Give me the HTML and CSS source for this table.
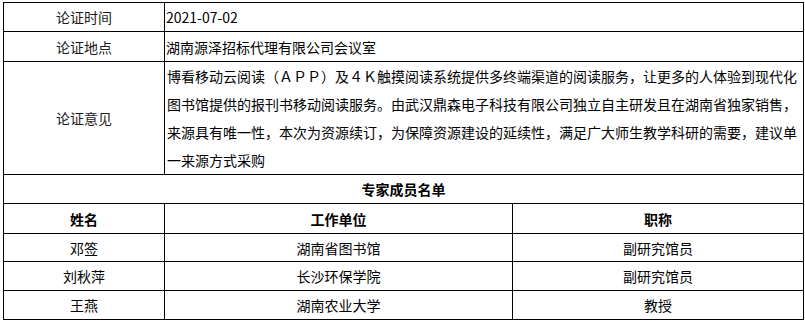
FILE: index.html
```html
<!DOCTYPE html>
<html lang="zh-CN">
<head>
<meta charset="utf-8">
<link rel="stylesheet" href="styles.css">
</head>
<body>
<div class="wrap">
<table class="sheet">
  <colgroup>
    <col class="c1">
    <col class="c2">
    <col class="c3">
  </colgroup>
  <tr class="r29">
    <td class="label">论证时间</td>
    <td class="value" colspan="2">2021-07-02</td>
  </tr>
  <tr class="r30">
    <td class="label">论证地点</td>
    <td class="value" colspan="2">湖南源泽招标代理有限公司会议室</td>
  </tr>
  <tr class="r113">
    <td class="label">论证意见</td>
    <td class="opinion" colspan="2">博看移动云阅读（ＡＰＰ）及４Ｋ触摸阅读系统提供多终端渠道的阅读服务，让更多的人体验到现代化图书馆提供的报刊书移动阅读服务。由武汉鼎森电子科技有限公司独立自主研发且在湖南省独家销售，来源具有唯一性，本次为资源续订，为保障资源建设的延续性，满足广大师生教学科研的需要，建议单一来源方式采购</td>
  </tr>
  <tr class="r29">
    <td class="head" colspan="3">专家成员名单</td>
  </tr>
  <tr class="r30">
    <td class="head">姓名</td>
    <td class="head">工作单位</td>
    <td class="head">职称</td>
  </tr>
  <tr class="r28">
    <td class="cell">邓签</td>
    <td class="cell">湖南省图书馆</td>
    <td class="cell">副研究馆员</td>
  </tr>
  <tr class="r29">
    <td class="cell">刘秋萍</td>
    <td class="cell">长沙环保学院</td>
    <td class="cell">副研究馆员</td>
  </tr>
  <tr class="r29">
    <td class="cell">王燕</td>
    <td class="cell">湖南农业大学</td>
    <td class="cell">教授</td>
  </tr>
</table>
</div>
</body>
</html>
```

FILE: styles.css
```css
html, body {
  margin: 0;
  padding: 0;
  background: #ffffff;
}

.wrap {
  padding: 2px 0 0 3px;
}

.sheet {
  border-collapse: collapse;
  table-layout: fixed;
  width: 800px;
  font-family: "Noto Sans CJK SC", "Liberation Sans", sans-serif;
  font-size: 14px;
  color: #000000;
}

.c1 { width: 161px; }
.c2 { width: 348px; }
.c3 { width: 291px; }

.sheet td {
  border: 1px solid #000000;
  padding: 0 1px;
  line-height: 20px;
  vertical-align: middle;
}

.r28 { height: 28px; }
.r29 { height: 29px; }
.r30 { height: 30px; }
.r113 { height: 113px; }

.label {
  text-align: center;
  color: #1a1a1a;
}

.value {
  text-align: left;
}

.sheet td.opinion {
  line-height: 28px;
  padding: 0 1px 0 2px;
  text-align: left;
}

.head {
  text-align: center;
  font-weight: bold;
}

.cell {
  text-align: center;
}
```
